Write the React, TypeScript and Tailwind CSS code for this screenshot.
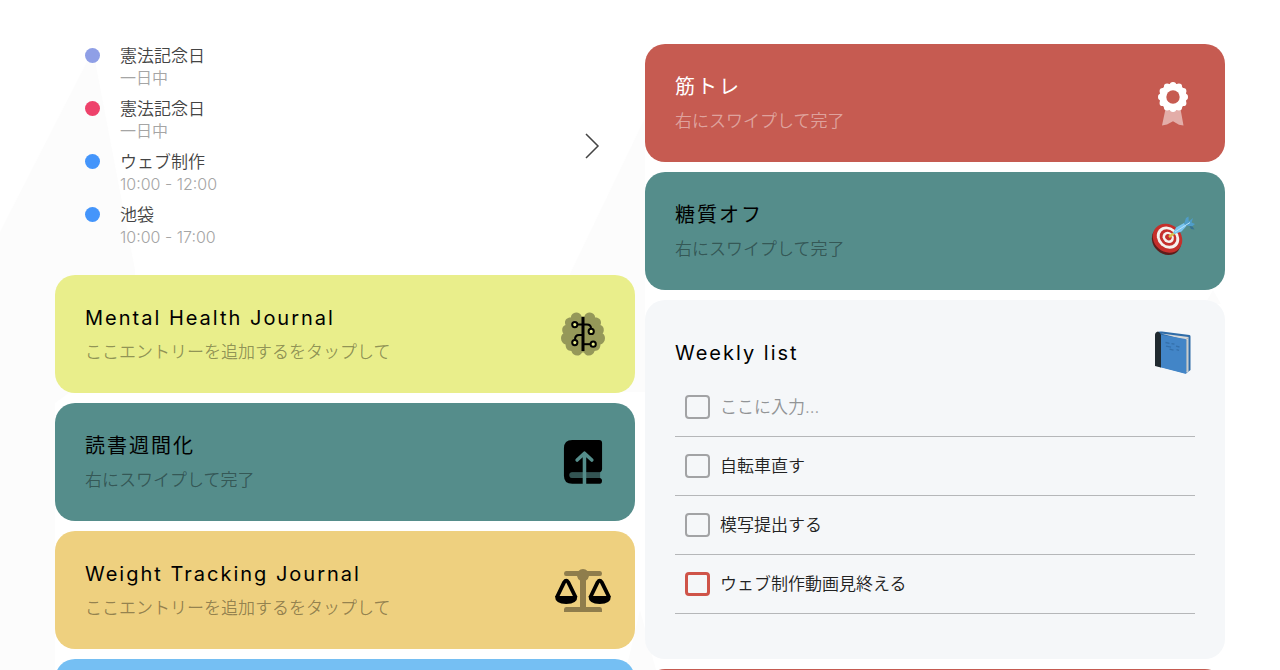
import { useState } from "react";
import type { ReactNode } from "react";

const events = [
  { id: 1, title: "憲法記念日", time: "一日中", dot: "bg-[#8f9fe6]" },
  { id: 2, title: "憲法記念日", time: "一日中", dot: "bg-[#ee426b]" },
  { id: 3, title: "ウェブ制作", time: "10:00 - 12:00", dot: "bg-[#4495fb]" },
  { id: 4, title: "池袋", time: "10:00 - 17:00", dot: "bg-[#4495fb]" },
];

const todos = [
  { id: "bike", text: "自転車直す", urgent: false },
  { id: "copy", text: "模写提出する", urgent: false },
  { id: "video", text: "ウェブ制作動画見終える", urgent: true },
];

function BrainIcon() {
  return (
    <svg viewBox="0 0 44 44" className="h-11 w-11" aria-hidden="true">
      <g fill="#000" opacity="0.36">
        <path d="M20.6 4.2C19.6 1.6 17.4.4 15 .6c-2.8.2-5 2.2-5.2 4.8C6.400 5.200 3.800 7.600 4 10.800c0 .8.200 1.600.6 2.300C2.200 14 1 16 1.200 18.400c.1 1.300.5 2.300 1.200 3.200C.8 22.600 0 24.300 0 26.200c0 3.200 2 5.600 4.600 6.300-.2 3.700 2.200 6.500 5.800 6.500.8 2.800 2.900 4.600 5.800 4.600 2.200 0 4-1.200 4.800-3.200h2c.8 2 2.600 3.200 4.800 3.200 2.900 0 5-1.800 5.800-4.600 3.600 0 6-2.800 5.800-6.500 2.600-.7 4.600-3.100 4.600-6.300 0-1.900-.8-3.600-2.400-4.600.7-.9 1.100-1.900 1.200-3.200.2-2.400-1-4.400-3.400-5.300.4-.7.6-1.500.6-2.300.2-3.200-2.400-5.600-5.800-5.400C34 2.800 31.800.8 29 .6c-2.400-.2-4.600 1-5.600 3.600z" />
      </g>
      <g fill="none" stroke="#000" strokeWidth="2">
        <path d="M22 5v34" strokeWidth="3" />
        <path d="M16.500 12.600H26q4 0 4 4" />
        <path d="M22 23h-4q-4 0-4 4.500" />
        <path d="M22 32.200h7.600" />
        <circle cx="13.800" cy="12.600" r="2.600" fill="#e9ee8b" />
        <circle cx="30.200" cy="19.400" r="2.600" fill="#e9ee8b" />
        <circle cx="13.800" cy="30.600" r="2.600" fill="#e9ee8b" />
        <circle cx="32.200" cy="32.200" r="2.600" fill="#e9ee8b" />
      </g>
    </svg>
  );
}

function BookUploadIcon() {
  return (
    <svg viewBox="0 0 39 45" className="h-11 w-10" aria-hidden="true">
      <path
        d="M8.500 0H36q3 0 3 3v27q0 2-2 3H8.500a2.800 2.800 0 0 0 0 5.800H37q2 .3 2 3t-2 3H8.500Q0 44.800 0 36.500V8.500Q0 0 8.500 0z"
        fill="#000"
      />
      <path d="M8.500 33H37v5.800H8.500a2.900 2.900 0 0 1 0-5.800z" fill="#000" opacity="0.4" />
      <path
        d="M21 45V14M13.500 20.500l7.500-7 7.500 7"
        fill="none"
        stroke="#558d8b"
        strokeWidth="3.600"
        strokeLinecap="round"
        strokeLinejoin="round"
      />
    </svg>
  );
}

function ScalesIcon() {
  return (
    <svg viewBox="0 0 56 44" className="h-11 w-14" aria-hidden="true">
      <path
        d="M11 3h12.500a6 6 0 0 1 9 0H45q2 0 2 2.500T45 8H34a6.500 6.500 0 0 1-3 4.500V39h14q2 0 2 2.500V44H9v-2.500Q9 39 11 39h14V12.500A6.500 6.500 0 0 1 22 8H11Q9 8 9 5.500T11 3z"
        fill="#000"
        opacity="0.4"
      />
      {[0, 33.500].map((x) => (
        <g key={x} transform={`translate(${x} 0)`}>
          <path
            d="M2 29 9.200 14.200q2-3 4 0L20.500 29"
            fill="none"
            stroke="#000"
            strokeWidth="3.800"
            strokeLinejoin="round"
          />
          <path d="M0 28h22.400q0 8-11.200 8T0 28z" fill="#000" />
        </g>
      ))}
    </svg>
  );
}

const scallops = Array.from({ length: 12 }, (_, i) => (i * Math.PI) / 6);

function AwardIcon() {
  return (
    <svg viewBox="0 -2 30 46" className="h-[46px] w-[30px]" aria-hidden="true">
      <path d="M7.500 27h15l3 16.500-4.500-.7-6-3.500-6 3.200-5 1z" fill="#fff" opacity="0.5" />
      <g fill="#fff">
        <circle cx="15" cy="15" r="13.600" />
        {scallops.map((a) => (
          <circle key={a} cx={15 + 11.8 * Math.cos(a)} cy={15 + 11.8 * Math.sin(a)} r="3.200" />
        ))}
      </g>
      <circle cx="15" cy="15" r="6.700" fill="#c65b51" />
    </svg>
  );
}

function DartIcon() {
  return (
    <svg viewBox="0 -10 44 50" className="h-[50px] w-11" aria-hidden="true">
      <ellipse cx="15.500" cy="24.500" rx="15.600" ry="13.400" fill="#5d1d1b" transform="rotate(42 15.500 24.500)" />
      <ellipse cx="16.500" cy="22.200" rx="15.600" ry="13.600" fill="#c52f2b" transform="rotate(42 16.500 22.200)" />
      <ellipse cx="17" cy="21.600" rx="12" ry="10.200" fill="#f5f1ee" transform="rotate(42 17 21.600)" />
      <ellipse cx="17" cy="21.600" rx="9" ry="7.600" fill="#c52f2b" transform="rotate(42 17 21.600)" />
      <ellipse cx="17.200" cy="21.400" rx="6" ry="5.200" fill="#f5f1ee" transform="rotate(42 17.200 21.400)" />
      <ellipse cx="17.400" cy="21.200" rx="3.400" ry="2.900" fill="#c52f2b" transform="rotate(42 17.400 21.200)" />
      <path d="m18 21 6-4.500" stroke="#d8c14a" strokeWidth="2.400" />
      <path d="m22 17 3-5.500L33 7l2.500 3-5 5.500-7 2.500z" fill="#78c4ef" />
      <path d="m33 8 2-6 2.500-1.500.2 5L42 2l-1.500 4.500L44 8l-3 2.500-5.500-1z" fill="#4f9dc9" />
      <path d="m24 16 15-9.500" stroke="#b9e2f8" strokeWidth="1" />
      <path d="m38.500 10 3 .5 2 3-3.500-.5z" fill="#377292" />
    </svg>
  );
}

function BlueBookIcon() {
  return (
    <svg viewBox="0 0 36 44" className="h-11 w-9" aria-hidden="true">
      <path d="M2 1.500Q4 0 7 .6L34.500 4q1 0 1 1.500V39l-4.500 3.500L2 35z" fill="#2f6ca8" />
      <path d="M6 2.500 33.500 6v34.500l-3 1.500V9z" fill="#d5d8da" />
      <path d="m30.500 9 3-2.500M31.800 9v31.500" stroke="#9b9fa2" strokeWidth="0.700" />
      <path d="M4 3.500 30.500 8q.8.200.8 1.200V42q0 1-1 .8L4.500 36z" fill="#4285c7" />
      <path d="M0 4q0-3 3-3.500Q5.500 1.500 6 4v32.500L0 35z" fill="#202a30" />
      <path
        d="m10.500 11.500 4 .8m2 .3 3 .6m-8.500 2 5 1m5-1 3.500.8m-10 2.200 4 1m3-.5 2.500.6"
        stroke="#3570ab"
        strokeWidth="1.300"
      />
    </svg>
  );
}

type CardProps = {
  title: string;
  note: string;
  className: string;
  noteClass: string;
  icon?: ReactNode;
};

function Card({ title, note, className, noteClass, icon }: CardProps) {
  return (
    <article
      className={`flex items-center justify-between rounded-[20px] py-[29px] pr-6 pl-[30px] ${className}`}
    >
      <div>
        <h2 className="text-[20px] leading-7 tracking-widest">{title}</h2>
        <p className={`mt-2 text-[17px] leading-6 font-[350] ${noteClass}`}>{note}</p>
      </div>
      <div className="flex h-[60px] w-14 items-center justify-center">{icon}</div>
    </article>
  );
}

function Events() {
  return (
    <section className="flex items-center justify-between px-[30px] pb-[18px]">
      <ul className="flex flex-col gap-[9px]">
        {events.map((e) => (
          <li key={e.id} className="flex gap-5">
            <span className={`mt-1 h-[15px] w-[15px] rounded-full ${e.dot}`} />
            <div>
              <p className="text-[17px] leading-6 font-[350] text-[#444]">{e.title}</p>
              <p className="text-[16px] leading-5 font-[350] text-[#a5a5a5]">{e.time}</p>
            </div>
          </li>
        ))}
      </ul>
      <button type="button" aria-label="予定を開く" className="p-1">
        <svg viewBox="0 0 18 28" className="h-7 w-[18px]" aria-hidden="true">
          <path d="m3 2 12 12L3 26" fill="none" stroke="#444" strokeWidth="1.500" />
        </svg>
      </button>
    </section>
  );
}

const boxClass = "h-6 w-[25px] shrink-0 appearance-none rounded-sm checked:bg-gray-400";

function WeeklyList() {
  const [draft, setDraft] = useState("");
  return (
    <section className="rounded-[20px] bg-[#f5f7f9] px-[30px] pt-[31px] pb-[45px]">
      <div className="flex items-start justify-between">
        <h2 className="mt-2 text-[20px] leading-7 tracking-widest">Weekly list</h2>
        <div className="flex w-11 justify-center">
          <BlueBookIcon />
        </div>
      </div>
      <ul className="mt-[3px]">
        <li className="flex h-[59px] items-center gap-[10px] border-b border-[#b5b7b9] pl-[10px]">
          <input type="checkbox" aria-label="新しい項目" className={`${boxClass} border-2 border-[#a2a3a5]`} />
          <input
            type="text"
            aria-label="項目を追加"
            placeholder="ここに入力..."
            value={draft}
            onChange={(e) => setDraft(e.target.value)}
            className="min-w-0 flex-1 bg-transparent text-[17px] leading-6 font-[350] outline-none placeholder:text-[#929496]"
          />
        </li>
        {todos.map((t) => (
          <li
            key={t.id}
            className="flex h-[59px] items-center gap-[10px] border-b border-[#b5b7b9] pl-[10px]"
          >
            <input
              id={t.id}
              type="checkbox"
              className={`${boxClass} ${t.urgent ? "border-3 border-[#cf5449]" : "border-2 border-[#a2a3a5]"}`}
            />
            <label htmlFor={t.id} className="text-[17px] leading-6 font-[350] text-[#222]">
              {t.text}
            </label>
          </li>
        ))}
      </ul>
    </section>
  );
}

function App() {
  return (
    <div className="relative isolate h-screen overflow-hidden bg-white font-['Inter','Noto_Sans_CJK_JP',sans-serif] text-black">
      {/* faint peaks behind the cards */}
      <svg
        viewBox="0 0 1280 670"
        preserveAspectRatio="none"
        className="absolute inset-0 -z-10 h-full w-full"
        aria-hidden="true"
      >
        <path d="M93 50 0 232v438h55V403l15-11h65V270z" fill="#fcfcfc" />
        <path d="M645 118 570 274v118h75z" fill="#fcfcfc" />
        <path d="m640 610-14 60h30zM1213 290l-8 14h16z" fill="#fcfcfc" />
      </svg>
      <main className="grid grid-cols-2 items-start gap-[10px] px-[55px] pt-[44px]">
        <div className="flex flex-col gap-[10px]">
          <Events />
          <Card
            title="Mental Health Journal"
            note="ここエントリーを追加するをタップして"
            className="bg-[#e9ee8b]"
            noteClass="text-black/40"
            icon={<BrainIcon />}
          />
          <Card
            title="読書週間化"
            note="右にスワイプして完了"
            className="bg-[#558d8b]"
            noteClass="text-black/40"
            icon={<BookUploadIcon />}
          />
          <Card
            title="Weight Tracking Journal"
            note="ここエントリーを追加するをタップして"
            className="bg-[#eed07f]"
            noteClass="text-black/40"
            icon={<ScalesIcon />}
          />
          <div className="h-[118px] rounded-[20px] bg-[#75bff3]" />
        </div>
        <div className="flex flex-col gap-[10px]">
          <Card
            title="筋トレ"
            note="右にスワイプして完了"
            className="bg-[#c65b51] text-white"
            noteClass="text-white/45"
            icon={<AwardIcon />}
          />
          <Card
            title="糖質オフ"
            note="右にスワイプして完了"
            className="bg-[#558d8b]"
            noteClass="text-black/40"
            icon={<DartIcon />}
          />
          <WeeklyList />
          <div className="h-[118px] rounded-[20px] bg-[#c65b51]" />
        </div>
      </main>
    </div>
  );
}

export default App;
